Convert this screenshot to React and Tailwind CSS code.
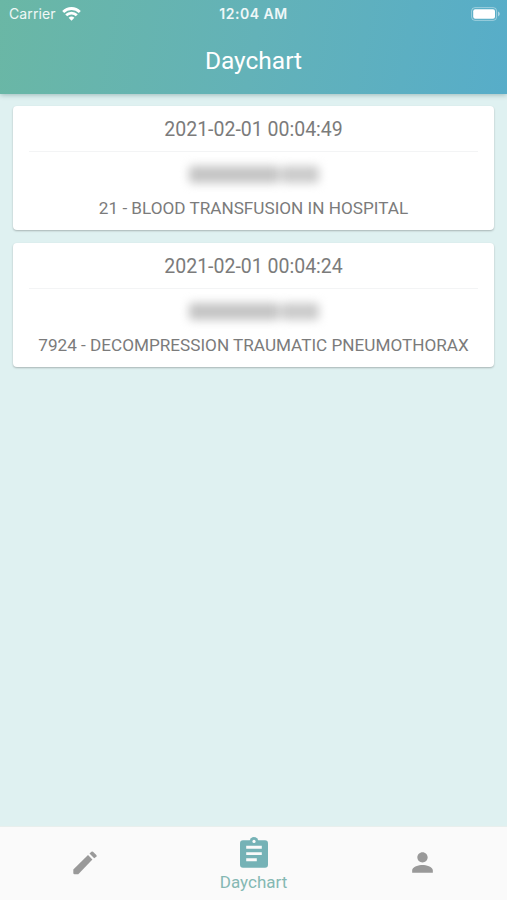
import { MdPerson } from "react-icons/md";

const ENTRIES = [
  { date: "2021-02-01 00:04:49", procedure: "21 - BLOOD TRANSFUSION IN HOSPITAL" },
  { date: "2021-02-01 00:04:24", procedure: "7924 - DECOMPRESSION TRAUMATIC PNEUMOTHORAX" },
];

function WifiIcon() {
  return (
    <svg width="19" height="14" viewBox="0 0 19 14" fill="none" stroke="white" strokeWidth="2.8">
      <path d="M1.2 4.9a11.8 11.8 0 0 1 16.6 0" />
      <path d="M4.2 8.3a7.5 7.5 0 0 1 10.6 0" />
      <path d="M9.5 13.8 6.6 10.8a4.2 4.2 0 0 1 5.8 0z" fill="white" stroke="none" />
    </svg>
  );
}

function BatteryIcon() {
  return (
    <svg width="30" height="14" viewBox="0 0 30 14">
      <rect x="0.6" y="0.6" width="25" height="12.8" rx="3.4" fill="none" stroke="white" strokeOpacity="0.4" />
      <rect x="2.2" y="2.2" width="21.8" height="9.6" rx="2" fill="white" />
      <path d="M27 4.6c2.4 1 2.4 3.8 0 4.8z" fill="white" fillOpacity="0.5" />
    </svg>
  );
}

function PencilIcon() {
  return (
    <svg width="24" height="24" viewBox="0 0 24 24" fill="currentColor">
      <path d="M.3 18.4 15 4l4.4 4.4L5.3 23.2H1.5Q.3 23.2.3 22z" />
      <path d="M16.5 2.6 18.4.8q.8-.8 1.6 0l3.3 3.3q.8.8 0 1.6L21.2 7.2z" />
    </svg>
  );
}

function ClipboardIcon() {
  return (
    <svg width="28" height="31" viewBox="0 0 28 31">
      <rect y="3.3" width="28" height="27.4" rx="3" fill="currentColor" />
      <circle cx="14" cy="4.3" r="4.3" fill="currentColor" />
      <circle cx="14" cy="4.4" r="1.6" fill="#fafafa" />
      <path d="M6.2 10.3h15.6M6.2 16.6h15.6M6.2 22.8h10.6" stroke="#fafafa" strokeWidth="2.9" />
    </svg>
  );
}

function Header() {
  return (
    <header className="relative h-[94px] shrink-0 bg-[linear-gradient(100deg,#6ab7a5_0%,#63b2b8_50%,#57adc9_100%)] text-white shadow-[0_1px_5px_rgba(0,60,60,0.3)]">
      {/* status bar */}
      <div className="grid h-[27px] grid-cols-[1fr_auto_1fr] items-center pl-[9px] pr-[9px]">
        <div className="flex items-center gap-[6px] font-['Inter',sans-serif] text-[14px] tracking-[0.1px] text-white/90">
          <span>Carrier</span>
          <WifiIcon />
        </div>
        <span className="text-center font-['Inter',sans-serif] text-[14px] font-semibold tracking-[0.5px] text-white/90">
          12:04 AM
        </span>
        <div className="-mr-[3px] flex justify-end">
          <BatteryIcon />
        </div>
      </div>
      <h1 className="pt-[17px] text-center text-[24.5px] leading-[34px]">Daychart</h1>
    </header>
  );
}

function EntryCard({ entry }) {
  return (
    <article className="flex h-[124px] flex-col rounded-[4px] bg-white px-[16px] text-center text-[#7b7b7b] shadow-[0_1px_2px_rgba(0,0,0,0.25)]">
      <p className="h-[46px] border-b border-[#f3f4f5] text-[19.5px] leading-[48px]">{entry.date}</p>
      {/* patient name is kept hidden */}
      <div className="flex h-[45px] items-center justify-center gap-[2px] blur-[5px]">
        <span className="h-[17px] w-[90px] rounded-[3px] bg-[#c4c4c4]" />
        <span className="h-[17px] w-[38px] rounded-[3px] bg-[#cbcbcb]" />
      </div>
      <p className="whitespace-nowrap text-[17.15px] leading-[22px]">{entry.procedure}</p>
    </article>
  );
}

function BottomNav() {
  return (
    <nav className="grid h-[74px] shrink-0 grid-cols-3 border-t border-[#e8efed] bg-[#fafafa] text-[#999]">
      <button aria-label="Edit" className="flex items-center justify-center pb-[2px]">
        <PencilIcon />
      </button>
      <button className="flex flex-col items-center gap-[3px] pt-[10px] text-[#75b2b6]">
        <ClipboardIcon />
        <span className="text-[17px] leading-[22px] text-[#85b8b3]">Daychart</span>
      </button>
      <button aria-label="Profile" className="flex items-center justify-center pb-[2px]">
        <MdPerson size={31} />
      </button>
    </nav>
  );
}

export default function App() {
  return (
    <div className="flex h-screen flex-col overflow-hidden bg-[#dff1f1] font-['Roboto',sans-serif]">
      <Header />
      <main className="flex flex-1 flex-col gap-[13px] px-[13px] pt-[12px]">
        {ENTRIES.map((entry) => (
          <EntryCard key={entry.date} entry={entry} />
        ))}
      </main>
      <BottomNav />
    </div>
  );
}
